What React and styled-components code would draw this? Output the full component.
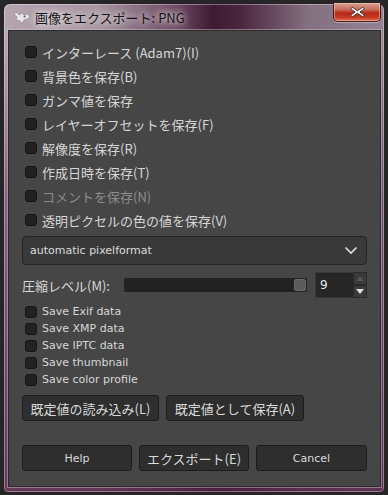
import React from 'react'
import styled, { createGlobalStyle } from 'styled-components'

const Global = createGlobalStyle`
    html, body {
        margin: 0;
        padding: 0;
        background: #262626;
    }
    body {
        font-family: "Noto Sans CJK JP", sans-serif;
    }
`;

const Window = styled.div`
    box-sizing: border-box;
    margin: 3px 0 0 3px;
    width: 382px;
    height: 490px;
    border-radius: 7px 7px 5px 5px;
    border: 1px solid #2c1f29;
    background:
        linear-gradient(180deg, rgba(0,0,0,0) 0%, rgba(0,0,0,0) 6%, rgba(90,40,78,0.55) 40%, rgba(80,30,66,0.8) 100%),
        linear-gradient(90deg, #b4a5b1 0%, #a6949f 25%, #6e4c64 45%, #3e1a33 55%, #4a253f 62%, #84707f 80%, #938291 100%);
    display: flex;
    flex-direction: column;
    padding: 0 3px 5px 4px;
    box-shadow: inset 0 0 0 1px rgba(255,255,255,0.35);
`;

const TitleBar = styled.div`
    height: 26px;
    display: flex;
    align-items: flex-start;
    gap: 4px;
    padding-left: 5px;
`;

const TitleIcon = styled.svg`
    margin-top: 7px;
    width: 18px;
    height: 14px;
`;

const TitleText = styled.div`
    margin-top: 5px;
    font-family: "Noto Sans CJK JP", sans-serif;
    font-size: 13px;
    line-height: 17px;
    color: #141414;
    text-shadow: 0 0 6px rgba(255,255,255,0.9), 0 0 10px rgba(255,255,255,0.7);
    flex: 1;
`;

const CloseButton = styled.div`
    box-sizing: border-box;
    width: 48px;
    height: 19px;
    margin-top: -1px;
    border: 1px solid #4a1a18;
    border-top: none;
    border-radius: 0 0 5px 5px;
    background: linear-gradient(180deg, #d9a092 0%, #c8705e 35%, #b42a18 55%, #c73a22 80%, #e07050 100%);
    box-shadow: inset 0 0 0 1px rgba(255,220,210,0.45), 0 1px 0 rgba(255,255,255,0.35);
    display: flex;
    align-items: center;
    justify-content: center;
`;

const Panel = styled.div`
    flex: 1;
    box-sizing: border-box;
    background: #464646;
    border: 1px solid #2b2b2b;
    box-shadow: 0 0 0 1px rgba(220,200,215,0.45);
    padding: 9px 13px 0 13px;
    display: flex;
    flex-direction: column;
`;

const CheckRow = styled.label`
    display: flex;
    align-items: center;
    gap: 5px;
    height: ${p => p.$tight ? '17px' : '24px'};
    padding-left: 3px;
    font-family: ${p => p.$latin ? '"DejaVu Sans", sans-serif' : '"Noto Sans CJK JP", "Noto Sans", sans-serif'};
    font-size: ${p => p.$latin ? '11px' : '13px'};
    color: ${p => p.$disabled ? '#8c8c8c' : '#d6d6d6'};
    white-space: nowrap;
`;

const Box = styled.span`
    box-sizing: border-box;
    width: 12px;
    height: 12px;
    border-radius: 3px;
    background: #222;
    border: 1px solid #151515;
    flex-shrink: 0;
`;

const Select = styled.div`
    box-sizing: border-box;
    margin-top: 4px;
    height: 29px;
    border-radius: 4px;
    background: #393939;
    border: 1px solid #252525;
    display: flex;
    align-items: center;
    justify-content: space-between;
    padding: 0 8px 0 7px;
    font-family: "DejaVu Sans", sans-serif;
    font-size: 11px;
    color: #dcdcdc;
`;

const LevelRow = styled.div`
    margin-top: 7px;
    height: 26px;
    display: flex;
    align-items: center;
`;

const LevelLabel = styled.span`
    width: 102px;
    font-family: "Noto Sans CJK JP", "Noto Sans", sans-serif;
    font-size: 13px;
    color: #d6d6d6;
`;

const Trough = styled.div`
    box-sizing: border-box;
    width: 183px;
    height: 14px;
    background: #222;
    border-radius: 2px;
    display: flex;
    justify-content: flex-end;
    align-items: center;
    padding-right: 1px;
`;

const Handle = styled.div`
    box-sizing: border-box;
    width: 12px;
    height: 12px;
    border-radius: 2px;
    background: #5b5b5b;
    border: 1px solid #6a6a6a;
`;

const Spin = styled.div`
    margin-left: 8px;
    display: flex;
    height: 26px;
`;

const SpinEntry = styled.div`
    box-sizing: border-box;
    width: 38px;
    background: #262626;
    border: 1px solid #383838;
    border-right: none;
    font-family: "DejaVu Sans", sans-serif;
    font-size: 12px;
    color: #e8e8e8;
    display: flex;
    align-items: center;
    padding-left: 4px;
`;

const SpinButtons = styled.div`
    display: flex;
    flex-direction: column;
    width: 14px;
`;

const SpinButton = styled.div`
    box-sizing: border-box;
    flex: 1;
    background: #3a3a3a;
    border: 1px solid #2a2a2a;
    display: flex;
    align-items: center;
    justify-content: center;
`;

const ExtraGroup = styled.div`
    margin-top: 5px;
    display: flex;
    flex-direction: column;
`;

const ButtonRow = styled.div`
    display: flex;
    gap: 7px;
    margin-top: ${p => p.$mt}px;
`;

const Button = styled.div`
    box-sizing: border-box;
    height: 26px;
    width: ${p => p.$w}px;
    border-radius: 3px;
    background: #2e2e2e;
    border: 1px solid #1c1c1c;
    display: flex;
    align-items: center;
    justify-content: center;
    font-family: ${p => p.$latin ? '"DejaVu Sans", sans-serif' : '"Noto Sans CJK JP", "Noto Sans", sans-serif'};
    font-size: ${p => p.$latin ? '11px' : '13px'};
    color: #dadada;
`;

const options = [
    { text: 'インターレース (Adam7)(I)' },
    { text: '背景色を保存(B)' },
    { text: 'ガンマ値を保存' },
    { text: 'レイヤーオフセットを保存(F)' },
    { text: '解像度を保存(R)' },
    { text: '作成日時を保存(T)' },
    { text: 'コメントを保存(N)', disabled: true },
    { text: '透明ピクセルの色の値を保存(V)' },
]

const extras = ['Save Exif data', 'Save XMP data', 'Save IPTC data', 'Save thumbnail', 'Save color profile']

const App = () => {
    return (
        <>
            <Global />
            <Window>
                <TitleBar>
                    <TitleIcon viewBox="0 0 18 14">
                        <path d="M1 3 L4 1 L6 4 L9 2 L11 4 L14 3 L17 5 L15 8 L11 9 L9 13 L7 10 L3 9 L4 6 Z" fill="#e8e4e8" stroke="#8a8088" strokeWidth="0.6" />
                        <circle cx="11.5" cy="5.5" r="1" fill="#555" />
                    </TitleIcon>
                    <TitleText>画像をエクスポート: PNG</TitleText>
                    <CloseButton>
                        <svg width="15" height="12" viewBox="0 0 14 11">
                            <path d="M2 1 L7 4.3 L12 1 L13.3 2.6 L9.2 5.5 L13.3 8.4 L12 10 L7 6.7 L2 10 L0.7 8.4 L4.8 5.5 L0.7 2.6 Z" fill="#fff" stroke="#3a2a2a" strokeWidth="0.8" />
                        </svg>
                    </CloseButton>
                </TitleBar>
                <Panel>
                    {options.map(o => (
                        <CheckRow key={o.text} $disabled={o.disabled}>
                            <Box />
                            {o.text}
                        </CheckRow>
                    ))}
                    <Select>
                        automatic pixelformat
                        <svg width="14" height="9" viewBox="0 0 14 9">
                            <path d="M1.5 1.5 L7 7 L12.5 1.5" fill="none" stroke="#e0e0e0" strokeWidth="1.6" />
                        </svg>
                    </Select>
                    <LevelRow>
                        <LevelLabel>圧縮レベル(M):</LevelLabel>
                        <Trough><Handle /></Trough>
                        <Spin>
                            <SpinEntry>9</SpinEntry>
                            <SpinButtons>
                                <SpinButton>
                                    <svg width="8" height="5" viewBox="0 0 8 5"><path d="M0 5 L4 0 L8 5 Z" fill="#555" /></svg>
                                </SpinButton>
                                <SpinButton>
                                    <svg width="8" height="5" viewBox="0 0 8 5"><path d="M0 0 L8 0 L4 5 Z" fill="#e0e0e0" /></svg>
                                </SpinButton>
                            </SpinButtons>
                        </Spin>
                    </LevelRow>
                    <ExtraGroup>
                        {extras.map(t => (
                            <CheckRow key={t} $tight $latin>
                                <Box />
                                {t}
                            </CheckRow>
                        ))}
                    </ExtraGroup>
                    <ButtonRow $mt={7}>
                        <Button $w={137}>既定値の読み込み(L)</Button>
                        <Button $w={138}>既定値として保存(A)</Button>
                    </ButtonRow>
                    <ButtonRow $mt={24}>
                        <Button $w={110} $latin>Help</Button>
                        <Button $w={110}>エクスポート(E)</Button>
                        <Button $w={111} $latin>Cancel</Button>
                    </ButtonRow>
                </Panel>
            </Window>
        </>
    )
}

export default App
